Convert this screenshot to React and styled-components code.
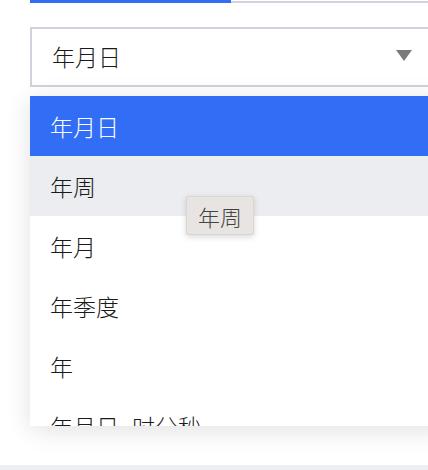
import React from 'react'
import styled, { createGlobalStyle } from 'styled-components'

const GlobalStyle = createGlobalStyle`
  html, body {
    margin: 0;
    padding: 0;
    background: #eeeff2;
  }
  body {
    font-family: "Noto Sans CJK SC", "Noto Sans", sans-serif;
  }
`

const options = ['年月日', '年周', '年月', '年季度', '年', '年月日 时分秒']

const App = () => {
  const selected = 0
  const hovered = 1

  return (
    <Page>
      <GlobalStyle />
      <TabStrip>
        <ActiveTab />
        <RestTab />
      </TabStrip>
      <Select>
        <SelectValue>{options[selected]}</SelectValue>
        <Caret />
      </Select>
      <Menu>
        {options.map((opt, i) => (
          <Option key={opt} $active={i === selected} $hover={i === hovered}>
            {opt}
          </Option>
        ))}
      </Menu>
      <Tip>{options[hovered]}</Tip>
    </Page>
  )
}

const Page = styled.div`
  position: relative;
  height: 465px;
  background: #fff;
  overflow: hidden;
`

const TabStrip = styled.div`
  display: flex;
  margin-left: 30px;
  height: 3px;
`

const ActiveTab = styled.div`
  width: 197px;
  border-left: 2px solid #316ef5;
  border-right: 2px solid #316ef5;
  border-bottom: 3px solid #316ef5;
`

const RestTab = styled.div`
  flex: 1;
  border-bottom: 2px solid #d1d4dc;
`

const Select = styled.div`
  display: flex;
  align-items: center;
  justify-content: space-between;
  box-sizing: border-box;
  margin: 24px 0 0 30px;
  width: 420px;
  height: 60px;
  border: 2px solid #d0d3dc;
  padding: 0 36px 0 20px;
`

const SelectValue = styled.span`
  font-size: 23px;
  font-weight: 300;
  color: #1a1a1a;
  margin-top: -3px;
`

const Caret = styled.span`
  width: 0;
  height: 0;
  border-left: 8px solid transparent;
  border-right: 8px solid transparent;
  border-top: 11px solid #7a7a7a;
  margin-top: -3px;
`

const Menu = styled.div`
  position: absolute;
  left: 30px;
  top: 96px;
  width: 420px;
  height: 330px;
  overflow: hidden;
  background: #fff;
  box-shadow: 0 4px 24px rgba(0, 0, 0, 0.12);
`

const Option = styled.div`
  height: 60px;
  display: flex;
  align-items: center;
  padding-left: 20px;
  font-size: 23px;
  font-weight: 300;
  word-spacing: 8px;
  white-space: pre;
  color: ${(p) => (p.$active ? '#fff' : '#1a1a1a')};
  background: ${(p) => (p.$active ? '#316ef5' : p.$hover ? '#ecedf1' : '#fff')};
`

const Tip = styled.div`
  position: absolute;
  left: 186px;
  top: 196px;
  box-sizing: border-box;
  width: 68px;
  height: 39px;
  display: flex;
  align-items: center;
  justify-content: center;
  background: #e7e4e2;
  border: 1px solid #d8d5d3;
  border-radius: 2px;
  box-shadow: 0 2px 6px rgba(0, 0, 0, 0.15);
  font-size: 22px;
  font-weight: 300;
  color: #444;
`

export default App
